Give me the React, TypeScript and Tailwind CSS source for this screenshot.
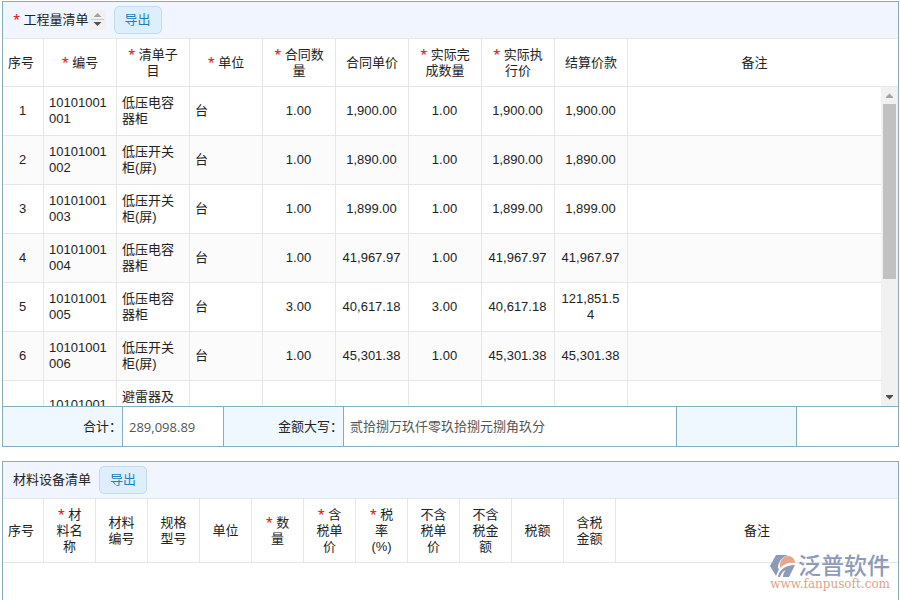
import type { ReactNode } from "react";

type Column = { title: string; required?: boolean };

const billColumns: Column[] = [
  { title: "序号" },
  { title: "编号", required: true },
  { title: "清单子目", required: true },
  { title: "单位", required: true },
  { title: "合同数量", required: true },
  { title: "合同单价" },
  { title: "实际完成数量", required: true },
  { title: "实际执行价", required: true },
  { title: "结算价款" },
  { title: "备注" },
];

const billRows = [
  ["1", "10101001001", "低压电容器柜", "台", "1.00", "1,900.00", "1.00", "1,900.00", "1,900.00", ""],
  ["2", "10101001002", "低压开关柜(屏)", "台", "1.00", "1,890.00", "1.00", "1,890.00", "1,890.00", ""],
  ["3", "10101001003", "低压开关柜(屏)", "台", "1.00", "1,899.00", "1.00", "1,899.00", "1,899.00", ""],
  ["4", "10101001004", "低压电容器柜", "台", "1.00", "41,967.97", "1.00", "41,967.97", "41,967.97", ""],
  ["5", "10101001005", "低压电容器柜", "台", "3.00", "40,617.18", "3.00", "40,617.18", "121,851.54", ""],
  ["6", "10101001006", "低压开关柜(屏)", "台", "1.00", "45,301.38", "1.00", "45,301.38", "45,301.38", ""],
  ["7", "10101001007", "避雷器及电容器安装", "台", "1.00", "1,860.00", "1.00", "1,860.00", "1,860.00", ""],
];

const materialColumns: Column[] = [
  { title: "序号" },
  { title: "材料名称", required: true },
  { title: "材料编号" },
  { title: "规格型号" },
  { title: "单位" },
  { title: "数量", required: true },
  { title: "含税单价", required: true },
  { title: "税率(%)", required: true },
  { title: "不含税单价" },
  { title: "不含税金额" },
  { title: "税额" },
  { title: "含税金额" },
  { title: "备注" },
];

function Star() {
  return <span className="font-['Open_Sans',sans-serif] leading-none font-semibold text-[#e02b2b]">* </span>;
}

function ExportButton() {
  return (
    <button type="button" className="ml-2 h-7 rounded-[5px] border border-[#c3dbec] bg-[#deeffc] px-[10px] text-[#1d7fbd]">
      导出
    </button>
  );
}

function PanelHeader({ children }: { children: ReactNode }) {
  return <div className="flex h-[37px] items-center border-b border-[#e6e6e6] bg-[#f0f5ff] pl-[10px]">{children}</div>;
}

function Columns({ count, wide }: { count: number; wide: boolean }) {
  return (
    <colgroup>
      <col className="w-[41px]" />
      {Array.from({ length: count - 2 }, (_, i) => (
        <col key={i} className={wide ? "w-[73px]" : "w-[52px]"} />
      ))}
      <col />
    </colgroup>
  );
}

function HeadRow({ columns, className }: { columns: Column[]; className: string }) {
  return (
    <thead>
      <tr className={className}>
        {columns.map((col) => (
          <th key={col.title} className="border-r border-b border-[#e6e6e6] px-[10px] font-normal first:pr-1 first:pl-0 last:border-r-0">
            {col.required && <Star />}
            {col.title}
          </th>
        ))}
      </tr>
    </thead>
  );
}

function Scrollbar() {
  return (
    <div className="flex w-[17px] shrink-0 flex-col items-center bg-[#f1f1f1]">
      <svg className="h-[17px] w-[17px] shrink-0" viewBox="0 0 17 17">
        <path d="M5 11h7v-1l-3.5-3.5L5 10z" fill="#a3a3a3" />
      </svg>
      <div className="h-[175px] w-[13px] bg-[#c1c1c1]" />
      <svg className="mt-auto h-[17px] w-[17px] shrink-0" viewBox="0 0 17 17">
        <path d="M5 6h7v1l-3.5 3.5L5 7z" fill="#505050" />
      </svg>
    </div>
  );
}

function BillPanel() {
  return (
    <section className="border border-[#86acbf]">
      <PanelHeader>
        <span>
          <Star />
          工程量清单
        </span>
        <button type="button" aria-label="排序">
          <svg width="17" height="20" viewBox="0 0 17 20">
            <rect width="17" height="20" fill="#f1f1f1" />
            <path d="M4.500 7h8L8.500 3z" fill="#a3a3a3" />
            <path d="M2 9.500h13" stroke="#c8c8c8" />
            <path d="M4.500 12h8l-4 4z" fill="#505050" />
          </svg>
        </button>
        <ExportButton />
      </PanelHeader>

      <div className="border-b border-[#e6e6e6] pr-[17px]">
        <table className="w-full table-fixed border-separate border-spacing-0">
          <Columns count={billColumns.length} wide />
          <HeadRow columns={billColumns} className="h-[47px] [&>th]:border-b-0" />
        </table>
      </div>

      <div className="flex h-[319px]">
        <div className="flex-1 overflow-y-auto [scrollbar-width:none]">
          <table className="w-full table-fixed border-separate border-spacing-0">
            <Columns count={billColumns.length} wide />
            <tbody>
              {billRows.map((row) => (
                <tr key={row[0]} className="even:bg-[#fbfbfb]">
                  {row.map((cell, i) => (
                    <td
                      key={i}
                      className={`border-r border-b border-[#e6e6e6] py-2 break-all last:border-r-0 ${i > 0 && i < 4 ? "pr-[5px] pl-[5px] text-left" : "pr-[6px] pl-[5px] text-center"}`}
                    >
                      {cell}
                    </td>
                  ))}
                </tr>
              ))}
            </tbody>
          </table>
        </div>
        <Scrollbar />
      </div>

      {/* totals */}
      <div className="flex h-10 border-t border-[#86acbf]">
        <label htmlFor="total" className="flex w-[120px] shrink-0 items-center justify-end border-r border-[#86acbf] bg-[#f0f8ff]">
          合计：
        </label>
        <input
          id="total"
          readOnly
          defaultValue="289,098.89"
          className="w-[101px] shrink-0 border-r border-[#86acbf] px-[6px] font-['Open_Sans',sans-serif] text-[#555] outline-none"
        />
        <label htmlFor="capital" className="flex w-[120px] shrink-0 items-center justify-end border-r border-[#86acbf] bg-[#f0f8ff]">
          金额大写：
        </label>
        <input
          id="capital"
          readOnly
          defaultValue="贰拾捌万玖仟零玖拾捌元捌角玖分"
          className="w-[333px] min-w-0 border-r border-[#86acbf] px-[6px] text-[#555] outline-none"
        />
        <div className="w-[120px] border-r border-[#86acbf] bg-[#f0f8ff]" />
        <div className="flex-1" />
      </div>
    </section>
  );
}

function MaterialPanel() {
  return (
    <section className="flex-1 border border-b-0 border-[#86acbf]">
      <PanelHeader>
        <span>材料设备清单</span>
        <ExportButton />
      </PanelHeader>
      <table className="w-full table-fixed border-separate border-spacing-0">
        <Columns count={materialColumns.length} wide={false} />
        <HeadRow columns={materialColumns} className="h-16" />
      </table>
    </section>
  );
}

function Watermark() {
  return (
    <a href="#" className="absolute right-[10px] bottom-[10px] flex flex-col">
      <span className="flex items-center justify-between">
        <svg width="26" height="24" viewBox="0 0 26 24">
          <path d="M6 1h12C12 3 8 8 8 14l1 1-3 7L0 12z" fill="#8e9bb8" />
          <path d="M10 14C9 7 13 2 18 2c4 0 7 3 7 7-6-1-11 1-15 5z" fill="#e8a58a" />
          <path d="M8 23c1-7 7-12 17-12l-6 12H13c0-3 1-5 3-7-3 1-5 4-6 7z" fill="#8e9bb8" />
        </svg>
        <span className="text-[23px] leading-6 font-medium text-[#8e9bb8]">泛普软件</span>
      </span>
      <span className="font-['DejaVu_Serif',serif] text-[12px] leading-3 text-[#e3a08c]">www.fanpusoft.com</span>
    </a>
  );
}

export default function App() {
  return (
    <main className="relative flex h-screen flex-col gap-[14px] overflow-hidden bg-white pt-px pr-px pl-[2px] font-['Liberation_Sans','Noto_Sans_CJK_SC',sans-serif] text-[13px] leading-4 text-[#222]">
      <BillPanel />
      <MaterialPanel />
      <Watermark />
    </main>
  );
}
